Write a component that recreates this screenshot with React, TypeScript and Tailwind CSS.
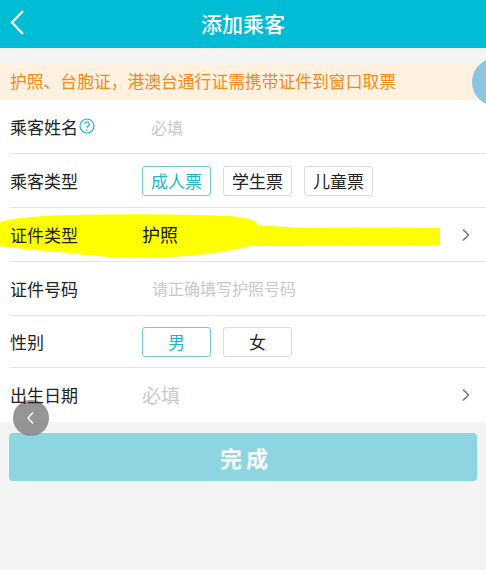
import React from "react";

const font = { fontFamily: '"Noto Sans CJK SC", "Noto Sans", sans-serif' };

function Chevron() {
  return (
    <svg width="10" height="14" viewBox="0 0 10 14" className="mr-[15px]">
      <path d="M2 1.5 L7.5 7 L2 12.5" fill="none" stroke="#777" strokeWidth="1.6" />
    </svg>
  );
}

function Choice({ label, active }: { label: string; active?: boolean }) {
  return (
    <div
      className={`w-[69px] h-[30px] flex items-center justify-center rounded-[3px] border text-[17px] ${
        active ? "border-[#6fcbd6] text-[#1bb6c9]" : "border-[#dcdcdc] text-[#222]"
      }`}
    >
      {label}
    </div>
  );
}

function Row({ label, children, last, h = "h-[54px]" }: { label: React.ReactNode; children?: React.ReactNode; last?: boolean; h?: string }) {
  return (
    <div className={`${h} flex items-center ${last ? "" : "border-b border-[#e6e6e6]"}`}>
      <div className="w-[132px] flex items-center text-[17px] text-[#222] relative z-10">{label}</div>
      <div className="flex-1 flex items-center">{children}</div>
    </div>
  );
}

export default function App() {
  return (
    <div className="w-[486px] h-[570px] bg-[#f4f4f4] relative overflow-hidden" style={font}>
      {/* header */}
      <div className="h-[48px] bg-[#00bcd4] flex items-center relative">
        <svg width="20" height="28" viewBox="0 0 20 28" className="absolute left-[8px] top-[9px]">
          <path d="M15 2 L4 13.5 L15 25" fill="none" stroke="#fff" strokeWidth="2.2" />
        </svg>
        <div className="flex-1 text-center text-white text-[21px] font-medium">添加乘客</div>
      </div>

      <div className="h-[15px]" />

      {/* notice */}
      <div className="h-[37px] bg-[#fff1e0] flex items-center pl-[10px] text-[16.8px] text-[#f28a18]">
        护照、台胞证，港澳台通行证需携带证件到窗口取票
      </div>

      {/* form */}
      <div className="bg-white pl-[10px]">
        <Row label={<>乘客姓名<svg width="16" height="16" viewBox="0 0 16 16" className="ml-[1px] -mt-[2px]"><circle cx="8" cy="8" r="7" fill="none" stroke="#1bb6c9" strokeWidth="1.2" /><path d="M5.8 6.2 A2.2 2.2 0 1 1 8.6 8.3 Q8 8.6 8 9.6 V10" fill="none" stroke="#1bb6c9" strokeWidth="1.2" /><circle cx="8" cy="12" r="0.8" fill="#1bb6c9" /></svg></>}>
          <span className="ml-[9px] text-[16px] text-[#c8c8c8]">必填</span>
        </Row>
        <Row label="乘客类型">
          <div className="flex gap-[12px]">
            <Choice label="成人票" active />
            <Choice label="学生票" />
            <Choice label="儿童票" />
          </div>
        </Row>
        <div className="relative">
          <svg width="486" height="54" viewBox="0 0 486 54" className="absolute -left-[10px] top-0">
            <path
              d="M0 14 Q20 8 70 7 Q160 5 230 8 Q258 11 258 17 L300 20 Q380 19 440 20 L440 37 Q380 37 300 38 L250 38 Q220 46 170 49 Q110 51 70 45 Q20 41 0 38 Z"
              fill="#ffff00"
            />
          </svg>
          <Row label="证件类型">
            <span className="flex-1 text-[18px] text-[#111] relative z-10">护照</span>
            <Chevron />
          </Row>
        </div>
        <Row label="证件号码">
          <span className="ml-[10px] -mt-[2px] text-[16px] text-[#c8c8c8]">请正确填写护照号码</span>
        </Row>
        <Row label="性别" h="h-[52px]">
          <div className="flex gap-[12px]">
            <Choice label="男" active />
            <Choice label="女" />
          </div>
        </Row>
        <Row label="出生日期" last>
          <span className="flex-1 text-[19px] text-[#c8c8c8]">必填</span>
          <Chevron />
        </Row>
      </div>

      {/* submit */}
      <div className="px-[9px] pt-[11px]">
        <div className="h-[48px] rounded-[4px] bg-[#8dd5e0] flex items-center justify-center pl-[6px] text-white text-[22px] font-bold tracking-[4px]">
          完成
        </div>
      </div>

      {/* floating back bubble */}
      <div className="absolute left-[13px] top-[400px] w-[36px] h-[36px] rounded-full bg-[#8a8a8a]/90 flex items-center justify-center">
        <svg width="10" height="14" viewBox="0 0 10 14">
          <path d="M7 1.5 L2 7 L7 12.5" fill="none" stroke="#fff" strokeWidth="1.4" />
        </svg>
      </div>

      {/* floating assistant bubble */}
      <div className="absolute left-[472px] top-[58px] w-[48px] h-[48px] rounded-full bg-[#8cc5e3]" />
    </div>
  );
}
